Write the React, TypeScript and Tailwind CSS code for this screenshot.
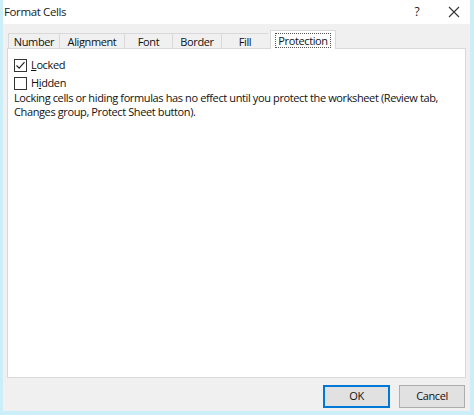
import React from "react";

const tabs = [
  { label: "Number", w: "w-[51px]" },
  { label: "Alignment", w: "w-[65px]" },
  { label: "Font", w: "w-[48px]" },
  { label: "Border", w: "w-[49px]" },
  { label: "Fill", w: "w-[47px]" },
];

function Checkbox({ checked }: { checked: boolean }) {
  return (
    <span className="w-[13px] h-[13px] border border-[#333] bg-white flex items-center justify-center">
      {checked && (
        <svg width="11" height="11" viewBox="0 0 11 11">
          <path d="M1.5 5.5 L4.2 8.2 L9.5 2.2" fill="none" stroke="#222" strokeWidth="1.2" />
        </svg>
      )}
    </span>
  );
}

export default function App() {
  return (
    <div
      className="w-[474px] h-[415px] flex flex-col border-l-[3px] border-r-[4px] border-b-[4px] border-[#cbeef8] text-[11px] tracking-[-0.38px] text-[#111] overflow-hidden"
      style={{ fontFamily: "'Open Sans', 'Noto Sans', sans-serif" }}
    >
      {/* title bar */}
      <div className="h-[24px] bg-white flex items-center shrink-0">
        <span className="pl-[1px] text-[11.5px] text-[#222]">Format Cells</span>
        <div className="ml-auto flex items-center">
          <span className="w-[24px] text-center text-[12px] text-[#222]">?</span>
          <span className="w-[18px]" />
          <svg width="14" height="14" viewBox="0 0 14 14" className="mr-[9px]">
            <path d="M2 2 L12 12 M12 2 L2 12" stroke="#333" strokeWidth="1.1" />
          </svg>
        </div>
      </div>

      {/* body */}
      <div className="flex-1 bg-[#f0f0f0] flex flex-col px-[4px] pt-[6px]">
        <div className="flex items-end h-[18px] pl-[1px]">
          {tabs.map((t) => (
            <div
              key={t.label}
              className={`${t.w} h-[15px] border-l border-t border-[#d9d9d9] flex items-center justify-center leading-none`}
            >
              {t.label}
            </div>
          ))}
          <div className="w-[66px] h-[19px] bg-white border border-b-0 border-[#d9d9d9] ml-[2px] -mb-px relative z-10 flex items-center justify-center">
            <span className="border border-dotted border-[#555] px-[2px] leading-[13px]">Protection</span>
          </div>
        </div>
        <div className="h-[330px] bg-white border border-[#d9d9d9] px-[6px] pt-[9px]">
          <div className="flex items-center gap-[4px] h-[14px]">
            <Checkbox checked />
            <span>
              <span className="underline">L</span>ocked
            </span>
          </div>
          <div className="flex items-center gap-[4px] h-[14px] mt-[4px]">
            <Checkbox checked={false} />
            <span>
              H<span className="underline">i</span>dden
            </span>
          </div>
          <div className="mt-[1px] leading-[14px] whitespace-nowrap">
            <div>Locking cells or hiding formulas has no effect until you protect the worksheet (Review tab,</div>
            <div>Changes group, Protect Sheet button).</div>
          </div>
        </div>
        <div className="flex justify-end gap-[9px] mt-[7px] pr-[1px]">
          <button className="w-[67px] h-[23px] bg-[#e1e1e1] border-2 border-[#0078d7]">OK</button>
          <button className="w-[66px] h-[23px] bg-[#e1e1e1] border border-[#adadad]">Cancel</button>
        </div>
      </div>
    </div>
  );
}
